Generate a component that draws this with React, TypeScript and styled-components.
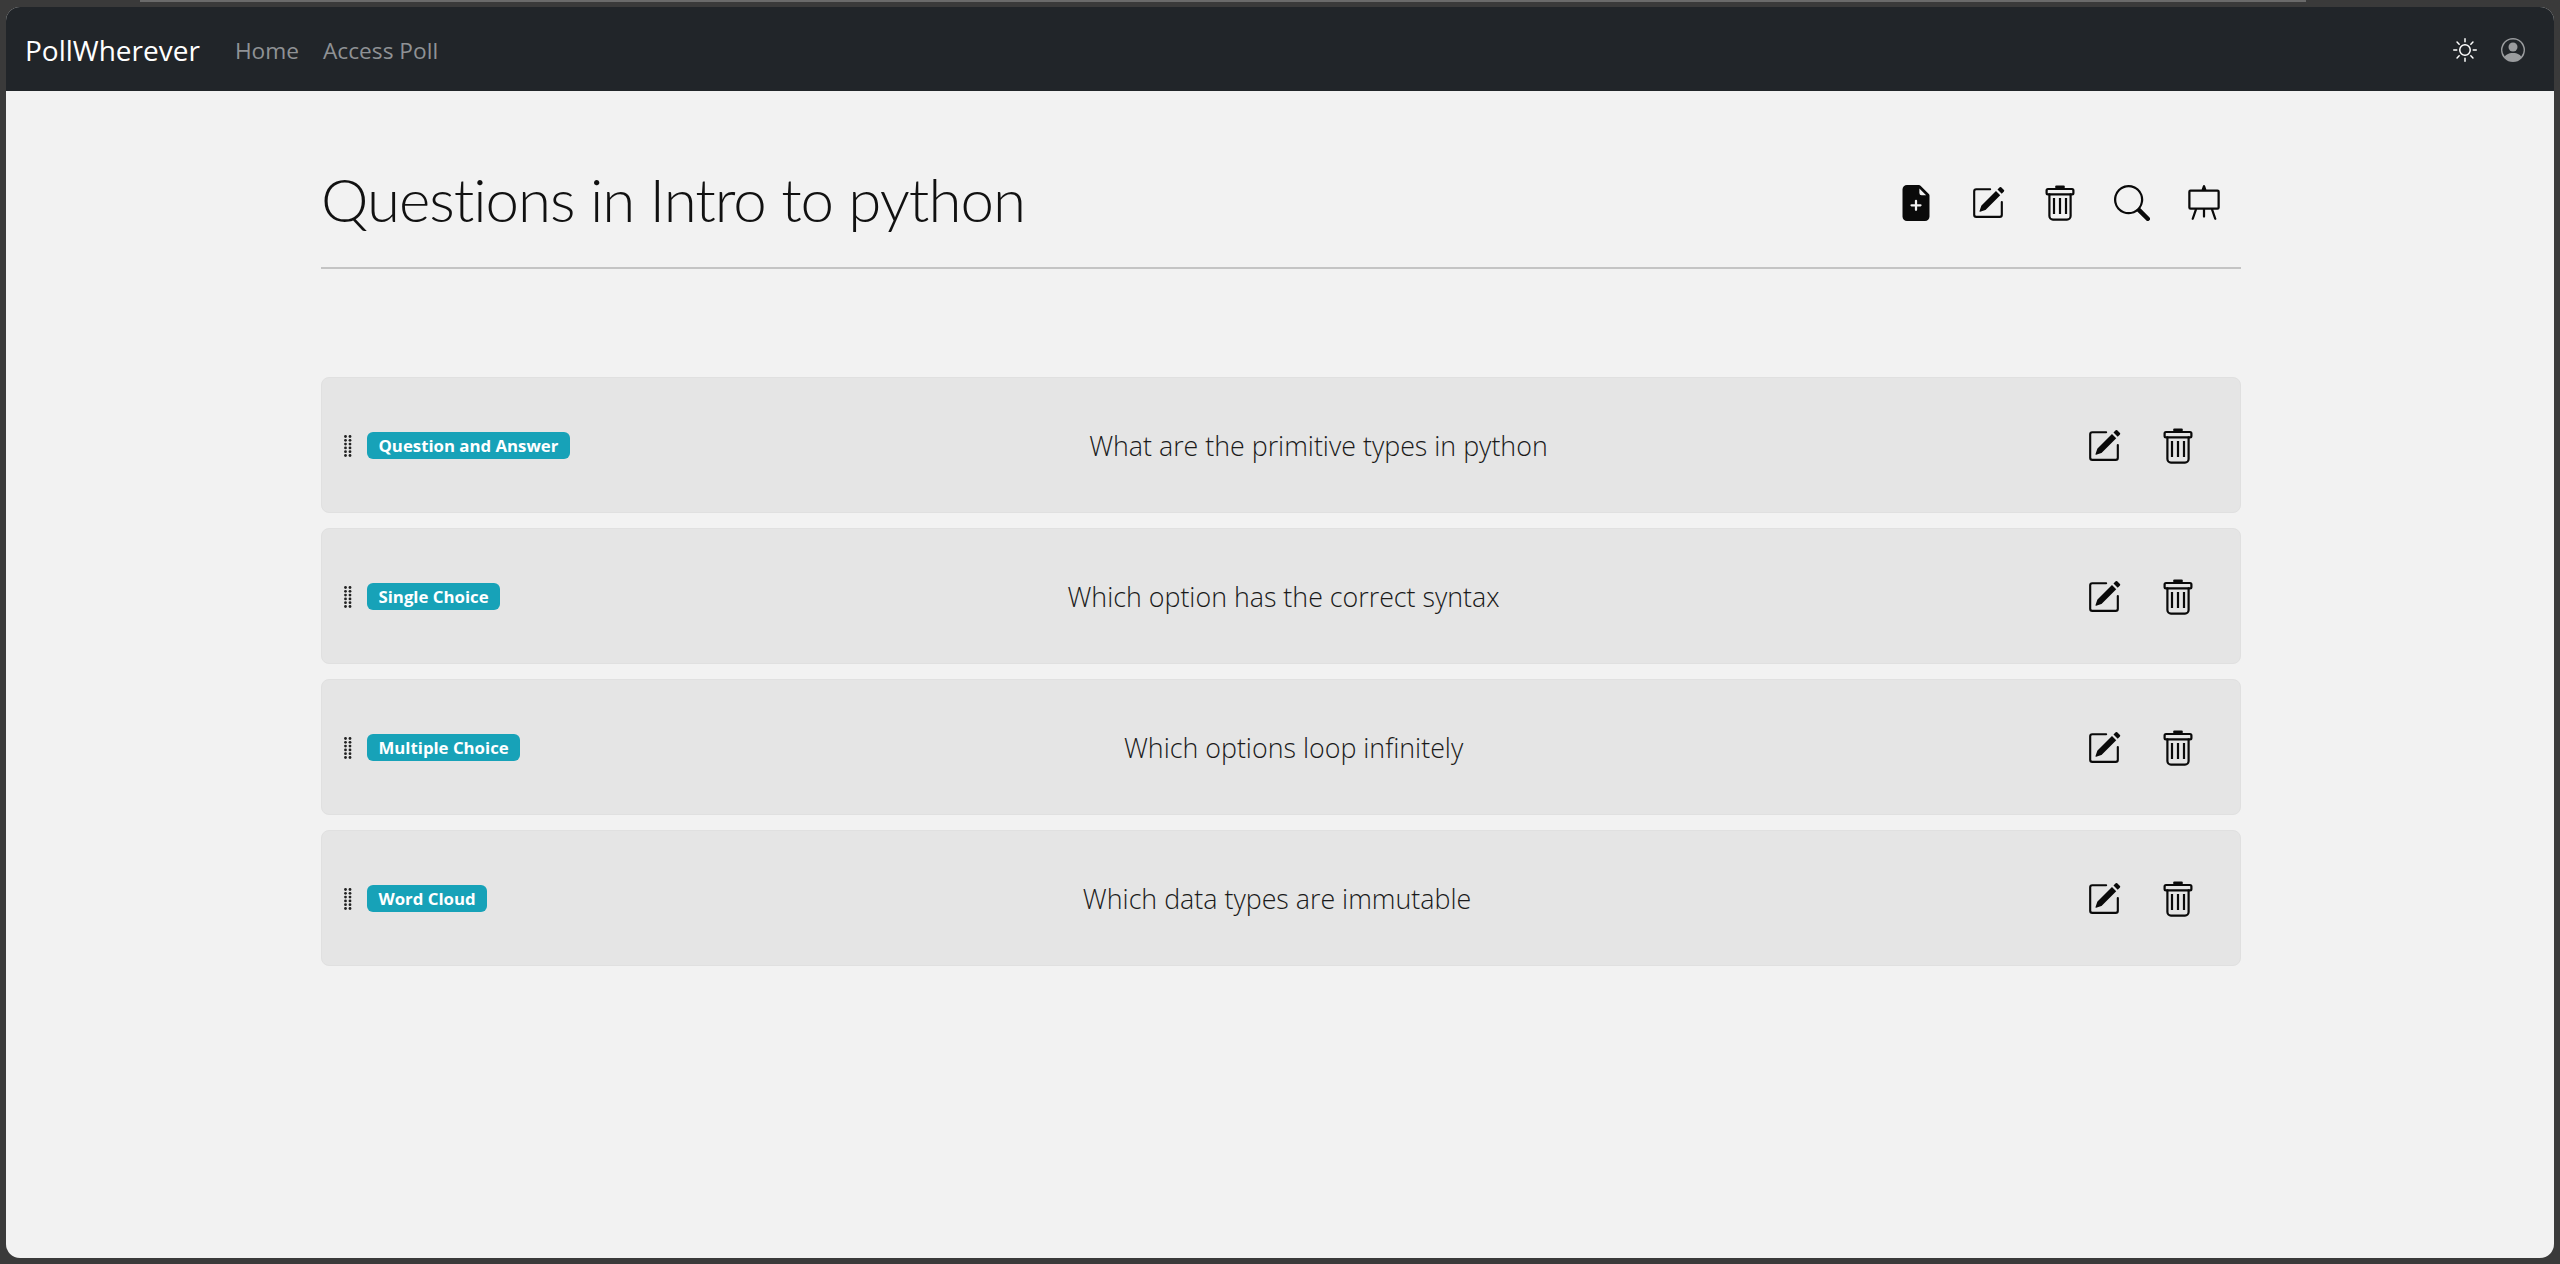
import React from "react"
import styled, { createGlobalStyle } from "styled-components"
import {
  BsEasel,
  BsFileEarmarkPlusFill,
  BsPencilSquare,
  BsPersonCircle,
  BsSearch,
  BsSun,
} from "react-icons/bs"

const GlobalStyle = createGlobalStyle`
  html, body {
    margin: 0;
    height: 100%;
    background: #3a3a3a;
  }
  body {
    font-family: "Open Sans", "Noto Sans", "Liberation Sans", sans-serif;
  }
`

const Frame = styled.div`
  position: relative;
  box-sizing: border-box;
  height: 1264px;
  padding: 7px 6px 6px;

  &::before {
    content: "";
    position: absolute;
    top: 0;
    left: 140px;
    right: 254px;
    height: 2px;
    background: #6a6a6a;
  }
`

const Window = styled.div`
  height: 100%;
  border-radius: 14px;
  overflow: hidden;
  background: #f2f2f2;
`

const Navbar = styled.nav`
  height: 84px;
  padding: 2px 29px 0 19px;
  box-sizing: border-box;
  display: flex;
  align-items: center;
  background: #212529;
`

const Brand = styled.span`
  font-size: 28px;
  color: #fff;
  margin-right: 35px;
`

const NavLink = styled.span`
  font-size: 22.7px;
  color: #8f9295;
  margin-right: 24px;
`

const NavIcons = styled.div`
  margin-left: auto;
  display: flex;
  align-items: center;
  gap: 24px;
`

const Content = styled.main`
  width: 1920px;
  margin-left: 315px;
`

const Header = styled.header`
  box-sizing: border-box;
  height: 178px;
  padding-top: 44px;
  display: flex;
  align-items: center;
  justify-content: space-between;
  border-bottom: 2px solid #c4c4c4;
`

const Title = styled.h1`
  margin: 0 0 4px;
  font-family: "Lato", "Open Sans", sans-serif;
  font-size: 60px;
  font-weight: 300;
  letter-spacing: -1px;
  color: #111;
`

const Toolbar = styled.div`
  display: flex;
  align-items: center;
  gap: 36px;
  margin: 3px 19px 0 0;
`

const IconSlot = styled.span`
  width: 36px;
  height: 36px;
  display: flex;
  align-items: center;
  justify-content: center;
  color: #0a0a0a;
`

const QuestionList = styled.section`
  margin-top: 108px;
  display: flex;
  flex-direction: column;
  gap: 15px;
`

const QuestionRow = styled.article`
  box-sizing: border-box;
  height: 136px;
  padding: 1px 44px 0 22px;
  display: flex;
  align-items: center;
  justify-content: space-between;
  background: #e5e5e5;
  border: 1px solid #e0e0e0;
  border-radius: 8px;
`

const RowStart = styled.div`
  display: flex;
  align-items: center;
  gap: 15px;
`

const Badge = styled.span`
  padding: 4px 11.5px;
  border-radius: 6px;
  background: #17a2b8;
  color: #fff;
  font-size: 16.8px;
  font-weight: 700;
  line-height: 19px;
`

const QuestionText = styled.span`
  font-size: 26.8px;
  font-weight: 300;
  color: #1a1a1a;
`

const RowActions = styled.div`
  display: flex;
  align-items: center;
  gap: 39px;
  padding-left: 20px;
  color: #0a0a0a;
`

const TrashIcon = () => (
  <svg width={36} height={36} viewBox="0 0 36 36" fill="none" stroke="currentColor" strokeWidth="2.2" strokeLinecap="round" strokeLinejoin="round">
    <path d="M14.5 2h7" strokeWidth="2.8" />
    <rect x="4.6" y="4" width="26.8" height="5.4" rx="1.4" />
    <path d="M7.4 9.4V31a3.6 3.6 0 0 0 3.6 3.6h14a3.6 3.6 0 0 0 3.6-3.6V9.4" />
    <path d="M12 13v16M18 13v16M24 13v16" strokeLinecap="butt" />
  </svg>
)

const GripIcon = () => (
  <svg width={8} height={22} viewBox="0 0 8 22" fill="#222">
    {[0, 1, 2, 3, 4, 5].map((row) => (
      <g key={row}>
        <circle cx="1.5" cy={1.5 + row * 3.8} r="1.4" />
        <circle cx="6" cy={1.5 + row * 3.8} r="1.4" />
      </g>
    ))}
  </svg>
)

const questions = [
  { kind: "Question and Answer", text: "What are the primitive types in python" },
  { kind: "Single Choice", text: "Which option has the correct syntax" },
  { kind: "Multiple Choice", text: "Which options loop infinitely" },
  { kind: "Word Cloud", text: "Which data types are immutable" },
]

export default function App() {
  return (
    <Frame>
      <GlobalStyle />
      <Window>
        <Navbar>
          <Brand>PollWherever</Brand>
          <NavLink>Home</NavLink>
          <NavLink>Access Poll</NavLink>
          <NavIcons>
            <BsSun size={24} color="#fff" />
            <BsPersonCircle size={24} color="#9a9c9e" />
          </NavIcons>
        </Navbar>
        <Content>
          <Header>
            <Title>Questions in Intro to python</Title>
            <Toolbar>
              <IconSlot><BsFileEarmarkPlusFill size={36} /></IconSlot>
              <IconSlot><BsPencilSquare size={34} /></IconSlot>
              <IconSlot><TrashIcon /></IconSlot>
              <IconSlot><BsSearch size={36} /></IconSlot>
              <IconSlot><BsEasel size={36} /></IconSlot>
            </Toolbar>
          </Header>
          <QuestionList>
            {questions.map((q) => (
              <QuestionRow key={q.kind}>
                <RowStart>
                  <GripIcon />
                  <Badge>{q.kind}</Badge>
                </RowStart>
                <QuestionText>{q.text}</QuestionText>
                <RowActions>
                  <BsPencilSquare size={34} />
                  <TrashIcon />
                </RowActions>
              </QuestionRow>
            ))}
          </QuestionList>
        </Content>
      </Window>
    </Frame>
  )
}
